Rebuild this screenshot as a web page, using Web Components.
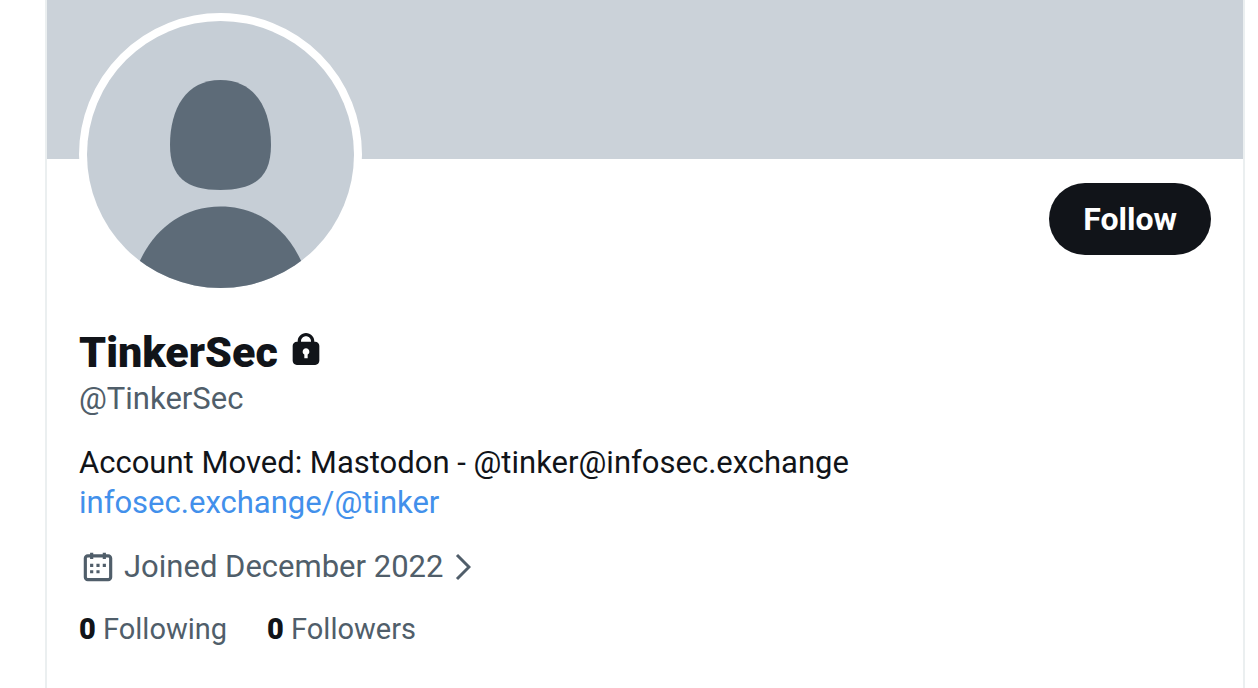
<!DOCTYPE html>
<html lang="en">
<head>
<meta charset="utf-8">
<title>TinkerSec (@TinkerSec)</title>
<style>
  body { --muted: #505e6a; margin: 0; background: #fff; font-family: Roboto, "Open Sans", sans-serif; font-size: 31px; line-height: 40px; color: #111419; }
</style>
</head>
<body>
<profile-page>
  <profile-banner></profile-banner>
  <profile-top><profile-avatar slot="avatar"></profile-avatar><follow-button slot="action">Follow</follow-button></profile-top>
  <profile-name>TinkerSec<span slot="handle">@TinkerSec</span></profile-name>
  <profile-bio>Account Moved: Mastodon - @tinker@infosec.exchange<span slot="link">infosec.exchange/@tinker</span></profile-bio>
  <profile-joined>Joined December 2022</profile-joined>
  <profile-stats></profile-stats>
</profile-page>
<script>
const define = (name, html) => customElements.define(name, class extends HTMLElement {
  constructor() {
    super();
    this.attachShadow({ mode: "open" }).innerHTML = html;
  }
});

define("profile-page", `
<style>
  :host { display: block; box-sizing: border-box; min-height: 100vh; margin: 0 13px 0 45px; border: solid #ebeff0; border-width: 0 2px; }
</style>
<main><slot></slot></main>`);

define("profile-banner", `
<style>:host { display: block; height: 159px; background: #cbd2d9; }</style>`);

define("profile-top", `
<style>
  :host { display: flex; justify-content: space-between; align-items: flex-start; padding: 0 32px; }
  .avatar { margin-top: -146px; }
  .action { margin-top: 24px; }
</style>
<div class="avatar"><slot name="avatar"></slot></div>
<div class="action"><slot name="action"></slot></div>`);

define("profile-avatar", `
<style>
  :host { display: block; width: 267px; height: 267px; border: 8px solid #fff; border-radius: 50%; background: #fff; }
  svg { display: block; border-radius: 50%; }
</style>
<svg width="267" height="267" viewBox="0 0 267 267" role="img" aria-label="Profile picture">
  <rect width="267" height="267" fill="#c6ced6"/>
  <path fill="#5d6b78" d="M133.500 59C168 59 184 88 184 124C184 156 168 169 133.500 169C99 169 83 156 83 124C83 88 99 59 133.500 59Z"/>
  <path fill="#5d6b78" d="M47 255C60 214 91 185.500 133.500 185.500C176 185.500 207 214 220 255V267H47Z"/>
</svg>`);

define("follow-button", `
<style>
  :host { display: block; }
  button { display: block; height: 72px; padding: 0 34px; border: 0; border-radius: 36px; background: #111419; color: #fff; font: inherit; font-size: 32px; font-weight: 700; cursor: pointer; }
</style>
<button type="button"><slot></slot></button>`);

define("profile-name", `
<style>
  :host { display: block; padding: 0 32px; margin-top: 32px; }
  h1 { display: flex; align-items: center; gap: 8px; margin: 0; font-size: 43px; line-height: 48px; font-weight: 900; }
  svg { width: 40px; height: 40px; margin-bottom: 4px; }
  .handle { margin-top: 3px; color: var(--muted); }
</style>
<h1><slot></slot><svg viewBox="0 0 24 24" fill="currentColor" role="img" aria-label="Protected account"><path d="M17.500 7H17v-.25c0-2.760-2.240-5-5-5s-5 2.240-5 5V7h-.5C5.120 7 4 8.120 4 9.500v9C4 19.880 5.120 21 6.500 21h11c1.390 0 2.500-1.120 2.500-2.500v-9C20 8.120 18.890 7 17.500 7zM13 14.730V17h-2v-2.270c-.59-.34-1-.99-1-1.730 0-1.100.9-2 2-2 1.110 0 2 .9 2 2 0 .74-.4 1.390-1 1.730zM15 7H9v-.25c0-1.660 1.350-3 3-3 1.660 0 3 1.340 3 3V7z"/></svg></h1>
<div class="handle"><slot name="handle"></slot></div>`);

define("profile-bio", `
<style>
  :host { display: block; padding: 0 32px; margin-top: 24px; }
  p { margin: 0; }
  a { color: #4290eb; text-decoration: none; }
</style>
<p><slot></slot></p>
<a href="#tinker"><slot name="link"></slot></a>`);

define("profile-joined", `
<style>
  :host { display: block; padding: 0 32px; margin-top: 24px; }
  a { display: flex; width: fit-content; align-items: center; color: var(--muted); text-decoration: none; }
  .calendar { width: 38px; height: 38px; margin-right: 7px; }
  .chevron { width: 16px; height: 28px; margin-left: 12px; }
</style>
<a href="#about"><svg class="calendar" viewBox="0 0 24 24" fill="currentColor" aria-hidden="true"><path d="M7 4V3h2v1h6V3h2v1h1.500C19.890 4 21 5.120 21 6.500v12c0 1.380-1.110 2.500-2.500 2.500h-13C4.120 21 3 19.880 3 18.500v-12C3 5.120 4.120 4 5.500 4H7zm0 2H5.500c-.27 0-.5.22-.5.5v12c0 .28.23.5.5.5h13c.28 0 .5-.22.5-.5v-12c0-.28-.22-.5-.5-.5H17v1h-2V6H9v1H7V6zm0 6h2v-2H7v2zm0 4h2v-2H7v2zm4-4h2v-2h-2v2zm0 4h2v-2h-2v2zm4-4h2v-2h-2v2z"/></svg><slot></slot><svg class="chevron" viewBox="0 0 16 28" fill="none" stroke="currentColor" stroke-width="3" aria-hidden="true"><path d="M2 2l12 12L2 26"/></svg></a>`);

define("profile-stats", `
<style>
  :host { display: flex; gap: 40px; padding: 0 32px; margin-top: 24px; font-size: 29px; line-height: 36px; }
  a { color: var(--muted); text-decoration: none; }
  b { color: #111419; font-weight: 900; }
</style>
<a href="#following"><b>0</b> Following</a><a href="#followers"><b>0</b> Followers</a>`);
</script>
</body>
</html>
